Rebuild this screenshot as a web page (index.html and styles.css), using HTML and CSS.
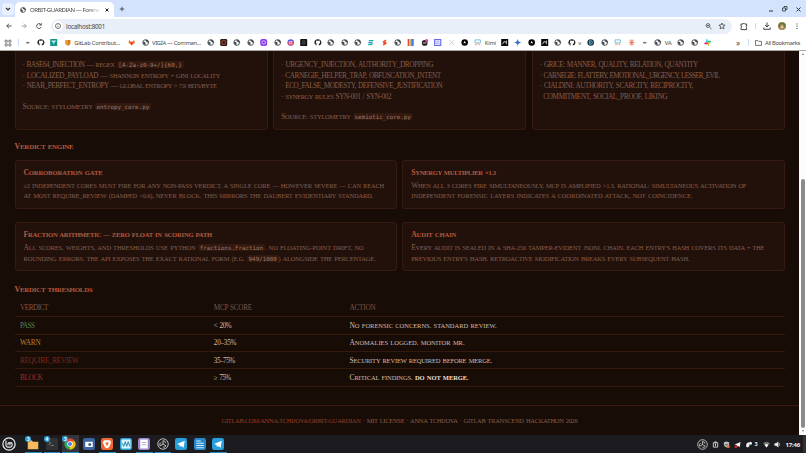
FILE: index.html
```
<!DOCTYPE html>
<html lang="en">
<head>
<meta charset="utf-8">
<title>ORBIT-GUARDIAN</title>
<link rel="stylesheet" href="styles.css">
</head>
<body>
<svg class="defs" width="0" height="0">
  <symbol id="globe" viewBox="0 0 16 16"><circle cx="8" cy="8" r="6.6" fill="#fff" stroke="#41464c" stroke-width="2"/><path d="M2 6l4 1 2 2-1 2 1 3-3-1-3-4zM7 2l1 3 3 1 1 2 3 1V6l-3-4z" fill="#41464c"/></symbol>
  <symbol id="github" viewBox="0 0 16 16"><path fill="#1b1f24" d="M8 .5a7.5 7.5 0 0 0-2.4 14.6c.4.1.5-.2.5-.4v-1.4c-2.1.5-2.5-1-2.5-1-.8-1.500-1.300-1.500-.2-1.600.8.1 1.200.8 1.200.8.7 1.200 1.800.8 2.200.6.1-.5.3-.8.5-1-1.700-.2-3.400-.8-3.400-3.700 0-.8.300-1.500.8-2-.1-.2-.4-1 .1-2 0 0 .6-.2 2.100.8a7 7 0 0 1 3.800 0c1.400-1 2-.8 2-.8.5 1 .2 1.800.1 2 .5.500.8 1.200.8 2 0 2.900-1.700 3.500-3.400 3.700.3.200.5.700.5 1.400v2.200c0 .2.100.5.500.4A7.500 7.500 0 0 0 8 .5z"/></symbol>
  <symbol id="fox" viewBox="0 0 16 16"><path d="M3 1l2 5h6l2-5 2.500 7L8 15 .5 8z" fill="#fc6d26"/><path d="M5 6h6l-3 9z" fill="#e24329"/></symbol>
  <symbol id="shield" viewBox="0 0 16 16"><path d="M2 2h12v7c0 3-3 5-6 6-3-1-6-3-6-6z" fill="#f0a030"/><path d="M8 2h6v7c0 3-3 5-6 6z" fill="#d07f25"/></symbol>
  <symbol id="teal" viewBox="0 0 16 16"><path d="M0 0h16v16H0z" fill="#16938a"/><path d="M3 4h10L8 10zM8 9v4" fill="#bfe9e3" stroke="#bfe9e3"/></symbol>
  <symbol id="dot" viewBox="0 0 16 16"><path d="M4 7.500q4-3 8 0v2q-4 2-8 0z" fill="#777"/></symbol>
  <symbol id="brown" viewBox="0 0 16 16"><rect width="16" height="16" rx="3" fill="#35180f"/><path d="M4 4h8v8H4z" fill="none" stroke="#b6684e" stroke-width="1.500"/></symbol>
  <symbol id="purple" viewBox="0 0 16 16"><rect width="16" height="16" rx="5" fill="#8a3ee8"/><circle cx="8" cy="8" r="4" fill="none" stroke="#fff" stroke-width="2" stroke-dasharray="3 1"/></symbol>
  <symbol id="insta" viewBox="0 0 16 16"><circle cx="8" cy="8" r="7.500" fill="#5361db"/><path d="M1 10a7.500 7.500 0 0 0 14 0L9 3z" fill="#ed3f58"/><path d="M5 6h6v5H5z" fill="none" stroke="#fff" stroke-width="1.500"/></symbol>
  <symbol id="black" viewBox="0 0 16 16"><rect width="16" height="16" rx="2" fill="#111"/><path d="M5 4h6v3H5zm0 5h6v3H5z" fill="none" stroke="#777"/></symbol>
  <symbol id="ess" viewBox="0 0 16 16"><path d="M3 2h11v3H5z" fill="#13a99b"/><path d="M3 6l10 2v3L3 9z" fill="#3277d5"/><path d="M2 11h10l-1 3H2z" fill="#23bba2"/></symbol>
  <symbol id="bolt" viewBox="0 0 16 16"><path d="M10 1L3 6l2 3 2 0-4 3 3 3 7-5-2-3H9l3-3z" fill="#ee4d27"/></symbol>
  <symbol id="book" viewBox="0 0 16 16"><rect x="1" width="4" height="16" fill="#e7473e"/><rect x="5" width="3" height="16" fill="#edb435"/><rect x="8" width="3" height="16" fill="#43b378"/><rect x="11" width="4" height="16" fill="#487de0"/></symbol>
  <symbol id="cat" viewBox="0 0 16 16"><circle cx="8" cy="9" r="6.500" fill="#222"/><path d="M4 9h8" stroke="#ddd" stroke-width="2"/><circle cx="12.500" cy="3.500" r="3.500" fill="#df38b5"/></symbol>
  <symbol id="bluebox" viewBox="0 0 16 16"><rect x="1" y="1" width="14" height="14" fill="#e8eaff" stroke="#6267e8" stroke-width="2.500"/><path d="M4 5h8M5 12V9h6v3" stroke="#6267e8" fill="none"/></symbol>
  <symbol id="cross" viewBox="0 0 16 16"><path d="M2 2l12 12M14 2L2 14" stroke="#bfc2c8" stroke-width="1.800"/></symbol>
  <symbol id="disc" viewBox="0 0 16 16"><circle cx="8" cy="8" r="7.500" fill="#050505"/><path d="M8 4l3 6-3-1-3 1z" fill="#fff"/></symbol>
  <symbol id="kimi" viewBox="0 0 16 16"><path d="M2 2h12v7H2z" fill="none" stroke="#62b7d7" stroke-width="2"/><path d="M2 13h4l2-3 3 3h3" fill="none" stroke="#ef9b6b" stroke-width="2"/></symbol>
  <symbol id="arrowbox" viewBox="0 0 16 16"><path d="M0 0h16v16H0z" fill="#080808"/><path d="M3 12l4-7 2 3 3-4v8" fill="none" stroke="#fff" stroke-width="1.500"/></symbol>
  <symbol id="spark" viewBox="0 0 16 16"><path d="M8 0q1 7 8 8-7 1-8 8-1-7-8-8 7-1 8-8z" fill="#346bd4"/></symbol>
  <symbol id="dd" viewBox="0 0 16 16"><circle cx="8" cy="8" r="7.500" fill="#092f46"/><path d="M5 4h3a4 4 0 0 1 0 8H5zM8 6v4" fill="none" stroke="#a6d4df" stroke-width="1.500"/></symbol>
  <symbol id="burst" viewBox="0 0 16 16"><path d="M8 1v14M1 8h14M3 3l10 10M13 3L3 13M5 1.500l6 13M11 1.500l-6 13" stroke="#df755b" stroke-width="1.500"/></symbol>
  <symbol id="slack" viewBox="0 0 16 16" stroke-width="3.500" stroke-linecap="round"><path d="M6 2v5" stroke="#36c5f0"/><path d="M9 6h5" stroke="#2eb67d"/><path d="M10 9.500V14" stroke="#ecb22e"/><path d="M2 10h5" stroke="#e01e5a"/></symbol>
  <symbol id="obs" viewBox="0 0 16 16"><circle cx="8" cy="8" r="7" fill="#252525" stroke="#ccc" stroke-width="1.200"/><path d="M8 8V3.500M8 8l4 2.500M8 8l-4 2.500M8 3.500q3 .2 3.500 3M12 10.500q-2 2.500-4 1.500M4 10.500Q2.800 7.500 5 6" fill="none" stroke="#ccc" stroke-width="1.200"/></symbol>
  <symbol id="tg" viewBox="0 0 16 16"><rect width="16" height="16" rx="3" fill="#289fd9"/><path d="M2.500 8L13 3.500 11.500 13 8 10.500 6.500 12 6 9z" fill="#fff"/></symbol>
</svg>

<header class="browser">
  <div class="tabs">
    <span class="tabmenu"><svg viewBox="0 0 8 8"><path d="M2 3l2 2 2-2" fill="none" stroke="#333" stroke-width="1.200"/></svg></span>
    <div class="tab"><svg class="i6"><use href="#globe"/></svg><span class="tabname"><span class="fit" data-w="69">ORBIT-GUARDIAN — Forens</span></span><svg class="x" viewBox="0 0 6 6"><path d="M1.500 1.500l3 3M4.500 1.500l-3 3" stroke="#222"/></svg></div>
    <svg class="plus" viewBox="0 0 6 6"><path d="M3 .8v4.400M.8 3h4.400" stroke="#333" stroke-width=".8"/></svg>
    <svg class="winctl" viewBox="0 0 36 8"><path d="M2 6h4" stroke="#333"/><path d="M15.500 3h3v3h-3zM17 3V1.500h3v3h-1.500" fill="none" stroke="#333" stroke-width=".8"/><path d="M29.500 2.500l4 4M33.500 2.500l-4 4" stroke="#333"/></svg>
  </div>
  <div class="toolbar">
    <svg class="nav" viewBox="0 0 44 10" fill="none" stroke="#444" stroke-width=".9"><path d="M7.500 5H2.800M5 2.700L2.700 5 5 7.300"/><path d="M17.500 5h4.700M20 2.700L22.300 5 20 7.300" stroke="#999"/><path d="M36.800 3.500A2.400 2.400 0 1 0 37.200 6M37.300 2.200v1.900h-1.900"/></svg>
    <div class="omni"><svg class="info" viewBox="0 0 10 10"><circle cx="5" cy="5" r="5" fill="#fff"/><circle cx="5" cy="5" r="2.500" fill="none" stroke="#555" stroke-width=".8"/><path d="M5 4.800v1.400M5 3.500v.6" stroke="#555" stroke-width=".7"/></svg><span class="fit url" data-w="39">localhost:8001</span>
      <svg class="omniright" viewBox="0 0 24 8" fill="none" stroke="#444" stroke-width=".8"><circle cx="4" cy="3.500" r="1.900"/><path d="M5.400 5L7.500 7M3 3.500h2"/><path d="M18 1l.9 2 2.200.2-1.700 1.400.5 2.200L18 5.700l-1.900 1.100.5-2.200-1.700-1.400 2.200-.2z"/></svg></div>
    <svg class="tools" viewBox="0 0 68 10" fill="none" stroke="#444" stroke-width="1"><path d="M5 3h2q.8-1.600 1.600 0h2v2q-1.500.8 0 1.600v2H5V6.800q1.500-.9 0-1.800z"/><path d="M19.500 2v6" stroke="#c8dafc"/><path d="M31 1.500v4.300M29 4l2 2 2-2M27.800 6.500v1.800h6.400V6.500"/><circle cx="46" cy="5" r="4" fill="#9b8050" stroke="none"/><path d="M43 6q0-4 3-4t3 4" stroke="#5d733a"/><circle cx="46" cy="6" r="1.500" fill="#e8c7a3" stroke="none"/><path d="M61 2.500v1M61 4.700v1M61 6.900v1" stroke-width="1.100"/></svg>
  </div>
  <div class="marks">
    <svg class="apps" viewBox="0 0 8 8" fill="none" stroke="#666" stroke-width=".8"><path d="M1.200 1.200h2v2h-2zM4.900 1.200h2v2h-2zM1.200 4.900h2v2h-2zM4.900 4.900h2v2h-2z"/></svg><i class="bar"></i>
    <svg><use href="#dot"/></svg><svg><use href="#github"/></svg><svg><use href="#teal"/></svg><svg><use href="#shield"/></svg><span class="m1"><span class="fit" data-w="46">GitLab Contribut…</span></span>
    <svg><use href="#fox"/></svg><svg><use href="#globe"/></svg><span class="m2"><span class="fit" data-w="49">VIGÍA — Comman…</span></span>
    <svg><use href="#globe"/></svg><svg><use href="#brown"/></svg><svg><use href="#globe"/></svg><svg><use href="#globe"/></svg><svg><use href="#purple"/></svg><svg><use href="#globe"/></svg><svg><use href="#insta"/></svg><svg><use href="#black"/></svg><svg><use href="#github"/></svg><svg><use href="#globe"/></svg><svg><use href="#globe"/></svg><svg><use href="#globe"/></svg><svg><use href="#ess"/></svg><svg><use href="#bolt"/></svg><svg><use href="#globe"/></svg><svg><use href="#book"/></svg><svg><use href="#cat"/></svg><svg><use href="#bluebox"/></svg><svg><use href="#cross"/></svg><svg><use href="#disc"/></svg><svg><use href="#kimi"/></svg><span class="m3"><span class="fit" data-w="11">Kimi</span></span>
    <svg><use href="#arrowbox"/></svg><svg><use href="#spark"/></svg><svg><use href="#disc"/></svg><svg><use href="#arrowbox"/></svg><svg><use href="#globe"/></svg><svg><use href="#github"/></svg><span class="m4">v</span>
    <svg><use href="#dd"/></svg><svg><use href="#globe"/></svg><svg><use href="#kimi"/></svg><svg><use href="#burst"/></svg><svg><use href="#dot"/></svg><svg><use href="#globe"/></svg><span class="m5">VA</span>
    <svg><use href="#globe"/></svg><svg><use href="#globe"/></svg><svg><use href="#slack"/></svg>
    <span class="more">»</span><i class="bar2"></i><svg class="folder" viewBox="0 0 8 8"><path d="M1 1.500h2.300l.8.900H7v4H1z" fill="none" stroke="#555" stroke-width=".8"/></svg><span class="fit" data-w="35">All Bookmarks</span>
  </div>
</header>

<div class="view">
<main class="page">
  <section class="cores">
    <article class="card">
      <p class="ln"><span class="fit up" data-w="161">· BASE64_INJECTION — <small>regex</small> <code>[A-Za-z0-9+/]{60,}</code></span></p>
      <p class="ln"><span class="fit up" data-w="197.500">· LOCALIZED_PAYLOAD — <small>Shannon entropy + Gini locality</small></span></p>
      <p class="ln"><span class="fit up" data-w="194">· NEAR_PERFECT_ENTROPY — <small>global entropy &gt; 7.9 bits/byte</small></span></p>
      <p class="ln gap"><span class="fit sc" data-w="128.500">Source: stylometry <code>entropy_core.py</code></span></p>
    </article>
    <article class="card">
      <p class="ln"><span class="fit up" data-w="152">· URGENCY_INJECTION, AUTHORITY_DROPPING</span></p>
      <p class="ln"><span class="fit up" data-w="159.500">· CARNEGIE_HELPER_TRAP, OBFUSCATION_INTENT</span></p>
      <p class="ln"><span class="fit up" data-w="161">· ECO_FALSE_MODESTY, DEFENSIVE_JUSTIFICATION</span></p>
      <p class="ln"><span class="fit up" data-w="110">· <small>Synergy rules</small> SYN-001 / SYN-002</span></p>
      <p class="ln gap"><span class="fit sc" data-w="131.500">Source: stylometry <code>semiotic_core.py</code></span></p>
    </article>
    <article class="card">
      <p class="ln"><span class="fit up" data-w="158">· Grice: MANNER, QUALITY, RELATION, QUANTITY</span></p>
      <p class="ln"><span class="fit up" data-w="179.500">· Carnegie: FLATTERY, EMOTIONAL_URGENCY, LESSER_EVIL</span></p>
      <p class="ln"><span class="fit up" data-w="153">· Cialdini: AUTHORITY, SCARCITY, RECIPROCITY,</span></p>
      <p class="ln in"><span class="fit up" data-w="124">COMMITMENT, SOCIAL_PROOF, LIKING</span></p>
    </article>
  </section>

  <h2><span class="fit sc" data-w="59">Verdict engine</span></h2>
  <section class="grid">
    <article class="card"><h3><span class="fit sc" data-w="79">Corroboration gate</span></h3>
      <p class="ln"><span class="fit lo" data-w="360.500">≥2 independent cores must fire for any non-PASS verdict. A single core — however severe — can reach</span></p>
      <p class="ln"><span class="fit lo" data-w="349.500">at most REQUIRE_REVIEW (damped ×0.6), never BLOCK. This mirrors the Daubert evidentiary standard.</span></p></article>
    <article class="card"><h3><span class="fit sc" data-w="84.500">Synergy multiplier ×1.3</span></h3>
      <p class="ln"><span class="fit sc" data-w="335">When all 3 cores fire simultaneously, MCP is amplified ×1.3. Rational: simultaneous activation of</span></p>
      <p class="ln"><span class="fit lo" data-w="281">independent forensic layers indicates a coordinated attack, not coincidence.</span></p></article>
    <article class="card"><h3><span class="fit sc" data-w="188.500">Fraction arithmetic — zero float in scoring path</span></h3>
      <p class="ln"><span class="fit sc" data-w="340">All scores, weights, and thresholds use Python <code>fractions.Fraction</code>. No floating-point drift, no</span></p>
      <p class="ln"><span class="fit lo" data-w="352">rounding errors. The API exposes the exact rational form (e.g. <code>949/1000</code>) alongside the percentage.</span></p></article>
    <article class="card"><h3><span class="fit sc" data-w="45">Audit chain</span></h3>
      <p class="ln"><span class="fit sc" data-w="353">Every audit is sealed in a SHA-256 tamper-evident JSONL chain. Each entry's hash covers its data + the</span></p>
      <p class="ln"><span class="fit lo" data-w="278">previous entry's hash. Retroactive modification breaks every subsequent hash.</span></p></article>
  </section>

  <h2><span class="fit sc" data-w="78">Verdict thresholds</span></h2>
  <section class="table">
    <div class="row head"><span><b class="fit up" data-w="28">Verdict</b></span><span><b class="fit up" data-w="38">MCP Score</b></span><span><b class="fit up" data-w="26">Action</b></span></div>
    <div class="row"><span class="pass"><b class="fit up" data-w="14.500">PASS</b></span><span><b class="fit up" data-w="17.500">&lt; 20%</b></span><span><b class="fit sc" data-w="147">No forensic concerns. Standard review.</b></span></div>
    <div class="row"><span class="warn"><b class="fit up" data-w="20.500">WARN</b></span><span><b class="fit up" data-w="22.500">20–35%</b></span><span><b class="fit sc" data-w="115">Anomalies logged. Monitor MR.</b></span></div>
    <div class="row"><span class="review"><b class="fit up" data-w="58.500">REQUIRE_REVIEW</b></span><span><b class="fit up" data-w="21">35–75%</b></span><span><b class="fit sc" data-w="142.500">Security review required before merge.</b></span></div>
    <div class="row"><span class="block"><b class="fit up" data-w="22.500">BLOCK</b></span><span><b class="fit up" data-w="17">≥ 75%</b></span><span><b class="fit sc" data-w="119">Critical findings. <strong>Do not merge.</strong></b></span></div>
  </section>
  <footer><span class="fit lo" data-w="356"><a>gitlab.com/anna.tchijova/orbit-guardian</a> · MIT License · Anna Tchijova · GitLab Transcend Hackathon 2026</span></footer>
</main>
<aside class="scroll"><i class="arrow upw"></i><i class="thumb"></i><i class="arrow down"></i></aside>
</div>

<nav class="taskbar">
  <svg class="mint" viewBox="0 0 16 16"><circle cx="8" cy="8" r="7" fill="none" stroke="#eee" stroke-width="1.400"/><path d="M4.500 4v5.500q0 2 2 2h3q2 0 2-2V8q0-1.500-1.200-1.500T9.100 8v1.500M9.100 8q0-1.500-1.100-1.500T6.800 8v1.500" fill="none" stroke="#eee" stroke-width="1.300"/></svg>
  <div class="app on"><svg viewBox="0 0 16 16"><path d="M1 3h5l2 2h7v10H1z" fill="#f4b860"/></svg><em>3</em></div>
  <div class="app on"><svg viewBox="0 0 16 16"><rect width="16" height="16" rx="2" fill="#303234"/><path d="M4 5l2 2-2 2M7 10h3" fill="none" stroke="#aaa"/></svg><em>4</em></div>
  <div class="app on lit"><svg viewBox="0 0 16 16"><circle cx="8" cy="8" r="7.500" fill="#34a853"/><path d="M1.500 4.500A7.500 7.500 0 0 1 14.500 4.500L8 8z" fill="#ea4335"/><path d="M14.500 4.500A7.500 7.500 0 0 1 8 15.500L8 8V4.500z" fill="#fbbc05"/><circle cx="8" cy="8" r="3.700" fill="#fff"/><circle cx="8" cy="8" r="2.800" fill="#4285f4"/></svg><em>3</em></div>
  <div class="app"><svg viewBox="0 0 16 16"><rect width="16" height="16" rx="3" fill="#3c659f"/><path d="M3 5h10v7H3z" fill="#fff"/><circle cx="9" cy="8.500" r="2" fill="#3c659f"/></svg></div>
  <div class="app on"><svg viewBox="0 0 16 16"><rect width="16" height="16" rx="3" fill="#ee6630"/><path d="M4 3h8l1.500 3L11 12l-3 2-3-2-2.500-6z" fill="#fff"/><path d="M5.500 6h5L8 11z" fill="#ee6630"/></svg></div>
  <div class="app"><svg viewBox="0 0 16 16"><rect width="16" height="16" rx="3" fill="#2da3d5"/><rect x="2" y="2" width="12" height="12" fill="#d9f5ff"/><path d="M3 7l2 4 2-6 2 6 2-6 2 6" fill="none" stroke="#187ca9" stroke-width="1.200"/></svg></div>
  <div class="app on"><svg viewBox="0 0 16 16"><rect width="16" height="16" rx="3" fill="#9b86c8"/><path d="M3 2h10v12H3z" fill="#fff"/><path d="M5 6h6M5 9h6" stroke="#a79abd"/></svg></div>
  <div class="app on"><svg><use href="#obs"/></svg></div>
  <div class="app"><svg><use href="#tg"/></svg></div>
  <div class="app"><svg viewBox="0 0 16 16"><rect width="16" height="16" rx="3" fill="#2688c8"/><path d="M3 4h6M3 7h10M3 10h10M3 13h10" stroke="#d6efff" stroke-width="1.500"/></svg></div>
  <div class="app on"><svg><use href="#tg"/></svg></div>
  <div class="tray">
    <svg class="t-obs"><use href="#obs"/></svg>
    <svg viewBox="0 0 16 16"><path d="M3 4h10v10H3zM6 4V2h4v2M8 6v6M6.500 7H8" fill="none" stroke="#ddd" stroke-width="2"/></svg>
    <svg viewBox="0 0 16 16"><path d="M2 3l6-2 6 2v5q0 5-6 7-6-2-6-7z" fill="#bbb"/><path d="M5 7l3 3 3-4" fill="none" stroke="#222" stroke-width="1.500"/><circle cx="12" cy="12.500" r="3.500" fill="#e97935"/></svg>
    <svg viewBox="0 0 16 16"><path d="M1 8l14-6-2 12-4-3-2 2-1-4z" fill="#eee"/><circle cx="4" cy="13" r="3" fill="#d9242c"/></svg>
    <svg viewBox="0 0 16 16"><path d="M2 12l2-7 4-2 2 2v7l-4 3z" fill="#eee"/><circle cx="12.500" cy="5" r="3.500" fill="#eee"/></svg>
    <b class="n">3</b>
    <svg viewBox="0 0 16 16"><path d="M0 5q8-7 16 0l-8 10z" fill="#777"/><path d="M4 9q4-4 8 0l-4 6z" fill="#fff"/></svg>
    <svg viewBox="0 0 16 16"><path d="M1 5h4l5-4v14l-5-4H1z" fill="#eee"/><path d="M12 5q2 3 0 6" fill="none" stroke="#eee" stroke-width="1.500"/></svg>
    <b class="fit clock" data-w="14.500">17:46</b>
    <i class="edge"></i>
  </div>
</nav>
<script src="fit.js"></script>
</body>
</html>
```
FILE: fit.js
```
// Justifies each single-line label to its measure by adjusting tracking.
document.querySelectorAll('.fit').forEach(function (el) {
  var target = parseFloat(el.dataset.w);
  var count = el.textContent.length;
  el.querySelectorAll('code').forEach(function (c) { count -= c.textContent.length; });
  var natural = el.getBoundingClientRect().width;
  el.style.letterSpacing = ((target - natural) / count) + 'px';
});
```
FILE: styles.css
```
* { box-sizing: border-box; }
body { margin: 0; width: 806px; height: 453px; overflow: hidden; background: #180c06; font-family: "Noto Sans", sans-serif; display: flex; flex-direction: column; }
svg, i { display: block; flex: none; }
p, h2, h3 { margin: 0; }
.defs { position: absolute; }
.fit { display: inline-block; white-space: pre; flex: none; }

.browser { height: 51px; flex: none; background: #fff; color: #474747; font-size: 6px; border-bottom: 1px solid #aaa7a2; }
.tabs { height: 17px; background: #d3e3fd; display: flex; align-items: center; }
.tabmenu { width: 12px; height: 12px; margin-left: 2px; border-radius: 4px; background: #e9f1fe; }
.tabmenu svg { width: 8px; height: 8px; margin: 2px; }
.tab { width: 99px; height: 15px; margin: 2px 0 0 1px; padding-left: 5px; background: #fff; border-radius: 5px 5px 0 0; display: flex; align-items: center; }
.i6 { width: 6px; height: 6px; }
.tabname { margin-left: 4px; width: 71px; line-height: 10px; overflow: hidden; -webkit-mask-image: linear-gradient(90deg, #000 80%, transparent); mask-image: linear-gradient(90deg, #000 80%, transparent); }
.x { width: 6px; height: 6px; margin-left: 3px; }
.plus { width: 6px; height: 6px; margin-left: 5px; }
.winctl { width: 36px; height: 8px; margin: 0 3px 0 auto; }
.toolbar { height: 18px; display: flex; align-items: center; }
.nav { width: 44px; height: 10px; margin-left: 4px; }
.omni { width: 681px; height: 15px; margin-left: 3px; padding-left: 2px; border-radius: 8px; background: #e9eff8; display: flex; align-items: center; }
.info { width: 10px; height: 10px; }
.url { margin-left: 3px; line-height: 10px; padding-top: 1px; color: #444; font-size: 6.200px; }
.omniright { width: 24px; height: 8px; margin-left: auto; margin-right: 4px; }
.tools { width: 68px; height: 10px; margin-left: 4px; }
.marks { height: 15px; display: flex; align-items: center; font-size: 5.800px; line-height: 10px; white-space: pre; }
.marks svg { width: 13.400px; height: 7px; }
.marks svg.apps { width: 8px; height: 8px; margin-left: 4px; }
.bar { width: 1px; height: 7px; margin: 0 1.600px 0 6px; background: #c8dafc; }
.m1 { width: 51.100px; }
.m2 { width: 51.600px; }
.m3 { width: 13.100px; }
.m4 { width: 6.100px; }
.m5 { width: 9.600px; }
.m1, .m2, .m3, .m4, .m5 { flex: none; }
.more { margin-left: auto; font-size: 8px; }
.bar2 { width: 1px; height: 7px; margin: 0 5px 0 8px; background: #c8dafc; }
.marks svg.folder { width: 9px; height: 8px; margin-right: 2px; }
.marks > .fit { margin-right: 6px; }

.view { height: 384px; flex: none; display: flex; }
.page { width: 799px; height: 384px; overflow: hidden; background: #180c06; color: #845e4e; font-family: "Liberation Serif", serif; display: flex; flex-direction: column; }
.cores { height: 79px; flex: none; margin: 0 14px 0 14.500px; display: grid; grid-template-columns: repeat(3, 1fr); gap: 5.500px; }
.cores .card { border-top: 0; border-radius: 0 0 4px 4px; padding-top: 8.800px; }
.card { background: #22110a; border: 1px solid #361b12; border-radius: 3px; padding: 0 7px; }
.ln { height: 10.350px; line-height: 10px; white-space: pre; display: flex; align-items: center; }
.ln.gap { margin-top: 10.300px; }
.ln.in { padding-left: 3.500px; }
.fit.up, .fit.sc, .fit.lo { text-transform: uppercase; word-spacing: .8px; line-height: 10px; padding-top: 1px; }
.up { font-size: 7.200px; }
.sc, .lo { font-size: 6.500px; }
.sc::first-letter { font-size: 1.150em; }
small { font-size: .9em; }
code { font: 5.850px "DejaVu Sans Mono", monospace; letter-spacing: 0; word-spacing: 0; text-transform: none; padding: .5px 1.800px; border-radius: 2px; background: #32190f; color: #a37868; vertical-align: .7px; }
h2 { height: 14px; margin: 9.300px 0 0 14.500px; color: #b55a40; flex: none; display: flex; align-items: center; }
h2 .sc { font-size: 6.900px; }
.grid { margin: 6.700px 14px 0 14.500px; display: grid; grid-template-columns: 1fr 1fr; grid-template-rows: 49px 49px; column-gap: 5px; row-gap: 13.500px; flex: none; }
.grid .card { padding: 5.800px 8px; }
h3 { height: 11px; margin-bottom: 2.500px; color: #b55a40; display: flex; align-items: center; }
h3 .sc { font-size: 6.600px; }
.grid + h2 { margin-top: 10.800px; }
.table { margin: 2.200px 14px 0 14.500px; flex: none; }
.row { height: 17.300px; display: grid; grid-template-columns: 193.800px 135.700px 1fr; align-items: center; padding-left: 5.500px; border-bottom: 1px solid #34190f; color: #d0bdb1; }
.row > span { display: flex; align-items: center; }
.row.head { height: 19px; color: #7b5748; }
.row b { font-weight: normal; }
.row strong { color: #f2dfd2; }
.row .pass { color: #4f8656; }
.row .warn { color: #b78235; }
.row .review { color: #742c21; }
.row .block { color: #a52b30; }
footer { margin-top: 18.300px; flex: 1; border-top: 1px solid #3a1a11; display: flex; justify-content: center; align-items: flex-start; padding-top: 9.500px; }
footer a { color: #943e28; }
.scroll { width: 7px; background: #fdfdfd; display: flex; flex-direction: column; align-items: center; }
.thumb { width: 4px; height: 249px; margin-top: 124px; border-radius: 2px; background: #8b8b8b; }
.arrow { border: 1.500px solid transparent; width: 0; height: 0; }
.upw { border-bottom: 2px solid #777; margin-top: 1px; }
.down { border-top: 2px solid #777; margin-top: 2px; }

.taskbar { height: 18px; flex: none; background: #1b1b20; display: flex; align-items: center; }
.mint { width: 14px; height: 14px; margin: 0 9.300px 0 2px; }
.app { position: relative; width: 16.500px; height: 18px; margin-right: 2px; padding: 3px 2px; flex: none; }
.app svg { width: 12px; height: 12px; }
.app.on { border-bottom: 1.500px solid #258cc0; }
.app.lit { background: #34343a; }
.app em { position: absolute; left: 0; top: 1px; width: 6px; height: 6px; border-radius: 3px; background: #2e9fd4; color: #fff; font: bold 4.500px/6px "Noto Sans", sans-serif; text-align: center; }
.tray { margin-left: auto; display: flex; align-items: center; gap: 4px; color: #eee; font-size: 6px; height: 18px; }
.tray svg { width: 7px; height: 7px; }
.tray svg.t-obs { width: 11px; height: 11px; }
.n { width: 4px; font-size: 5.500px; margin-left: -1px; }
.clock { line-height: 10px; padding-top: 1px; margin-left: 1px; }
.edge { width: 3px; height: 18px; background: #303035; margin-left: -1px; }
```
